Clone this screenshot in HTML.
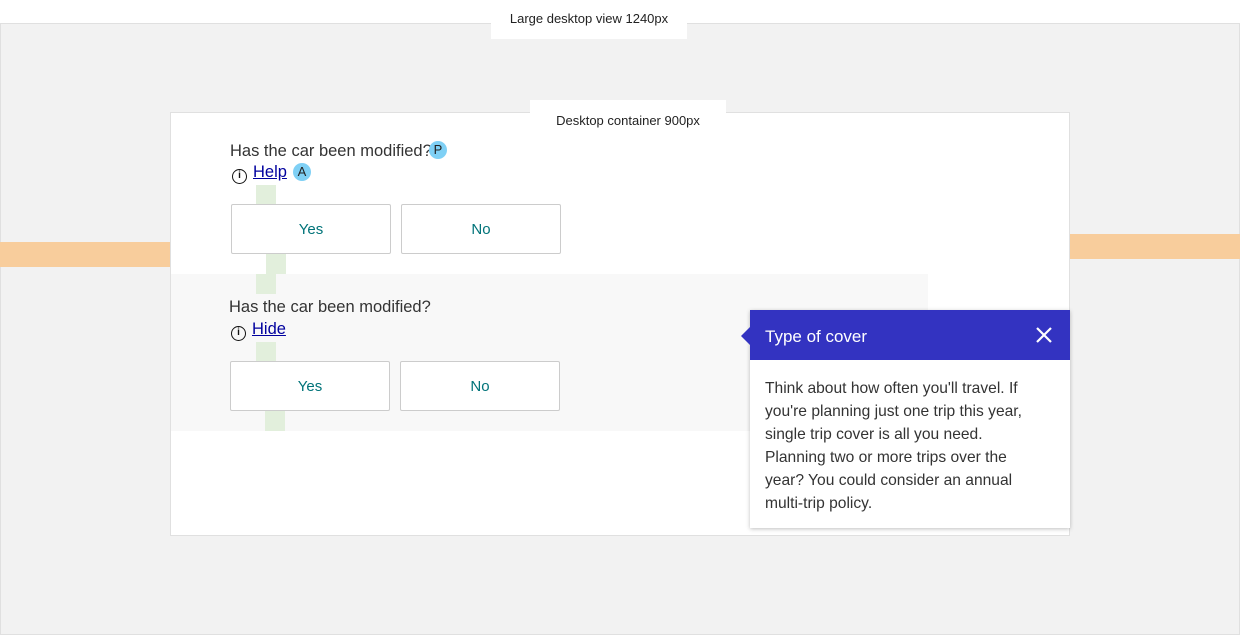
<!DOCTYPE html>
<html><head><style>
*{box-sizing:border-box;margin:0;padding:0}
body{width:1240px;height:635px;background:#fff;position:relative;overflow:hidden;font-family:"Liberation Sans",sans-serif;color:#333}
.a{position:absolute}
.btn{position:absolute;width:160px;height:50px;border:1px solid #ccc;border-radius:2px;background:#fff;color:#007379;font-size:15px;text-align:center;line-height:50px}
.g{position:absolute;width:20px;height:20px;background:#e2efdc}
.q{position:absolute;font-size:16.5px;color:#333}
.lnk{color:#00009e;text-decoration:underline;font-size:16.5px}
.ic{display:inline-block;width:15px;height:15px;border:1.5px solid #111;border-radius:50%;font-size:10px;line-height:12px;text-align:center;font-weight:bold;vertical-align:-1px;margin-right:6px;color:#111}
</style></head><body>
<div class="a" style="left:0;top:23px;width:1240px;height:612px;background:#f2f2f2;border:1px solid #e0e0e0"></div>
<div class="a" style="left:491px;top:0;width:196px;height:39px;background:#fff;font-size:13px;text-align:center;line-height:38px;color:#222">Large desktop view 1240px</div>
<div class="a" style="left:0;top:242px;width:171px;height:25px;background:#f8cd9c"></div>
<div class="a" style="left:1070px;top:234px;width:170px;height:25px;background:#f8cd9c"></div>
<div class="a" style="left:170px;top:112px;width:900px;height:424px;background:#fff;border:1px solid #e0e0e0"></div>
<div class="a" style="left:530px;top:100px;width:196px;height:38px;background:#fff;font-size:13px;text-align:center;line-height:42px;color:#222">Desktop container 900px</div>
<div class="a" style="left:171px;top:274px;width:757px;height:157px;background:#f8f8f8"></div>
<div class="g" style="left:256px;top:185px;height:19px"></div>
<div class="g" style="left:266px;top:254px"></div>
<div class="g" style="left:256px;top:274px"></div>
<div class="g" style="left:256px;top:342px;height:19px"></div>
<div class="g" style="left:265px;top:411px"></div>
<div class="q" style="left:230px;top:142px">Has the car been modified?</div>
<div class="a" style="left:429px;top:141px;width:18px;height:18px;border-radius:50%;background:#7fd0f5;font-size:13px;text-align:center;line-height:18px;color:#222">P</div>
<div class="a" style="left:232px;top:163px"><span class="ic">i</span><span class="lnk">Help</span></div>
<div class="a" style="left:293px;top:163px;width:18px;height:18px;border-radius:50%;background:#7fd0f5;font-size:13px;text-align:center;line-height:18px;color:#222">A</div>
<div class="btn" style="left:231px;top:204px">Yes</div>
<div class="btn" style="left:401px;top:204px">No</div>
<div class="q" style="left:229px;top:298px">Has the car been modified?</div>
<div class="a" style="left:231px;top:320px"><span class="ic">i</span><span class="lnk">Hide</span></div>
<div class="btn" style="left:230px;top:361px">Yes</div>
<div class="btn" style="left:400px;top:361px">No</div>
<div class="a" style="left:750px;top:310px;width:320px;height:218px;background:#fff;box-shadow:0 1px 4px rgba(0,0,0,.25)"></div>
<div class="a" style="left:741px;top:326px;width:0;height:0;border-top:10px solid transparent;border-bottom:10px solid transparent;border-right:10px solid #3333c1"></div>
<div class="a" style="left:750px;top:310px;width:320px;height:50px;background:#3333c1;color:#fff;font-size:17px;line-height:54px;padding-left:15px">Type of cover
<svg class="a" style="left:286px;top:17px" width="16" height="16" viewBox="0 0 16 16"><path d="M1 1L15 15M15 1L1 15" stroke="#fff" stroke-width="2.2"/></svg></div>
<div class="a" style="left:765px;top:377px;width:310px;font-size:15.6px;line-height:23px;color:#333;white-space:nowrap">Think about how often you'll travel. If<br>you're planning just one trip this year,<br>single trip cover is all you need.<br>Planning two or more trips over the<br>year? You could consider an annual<br>multi-trip policy.</div>
</body></html>
